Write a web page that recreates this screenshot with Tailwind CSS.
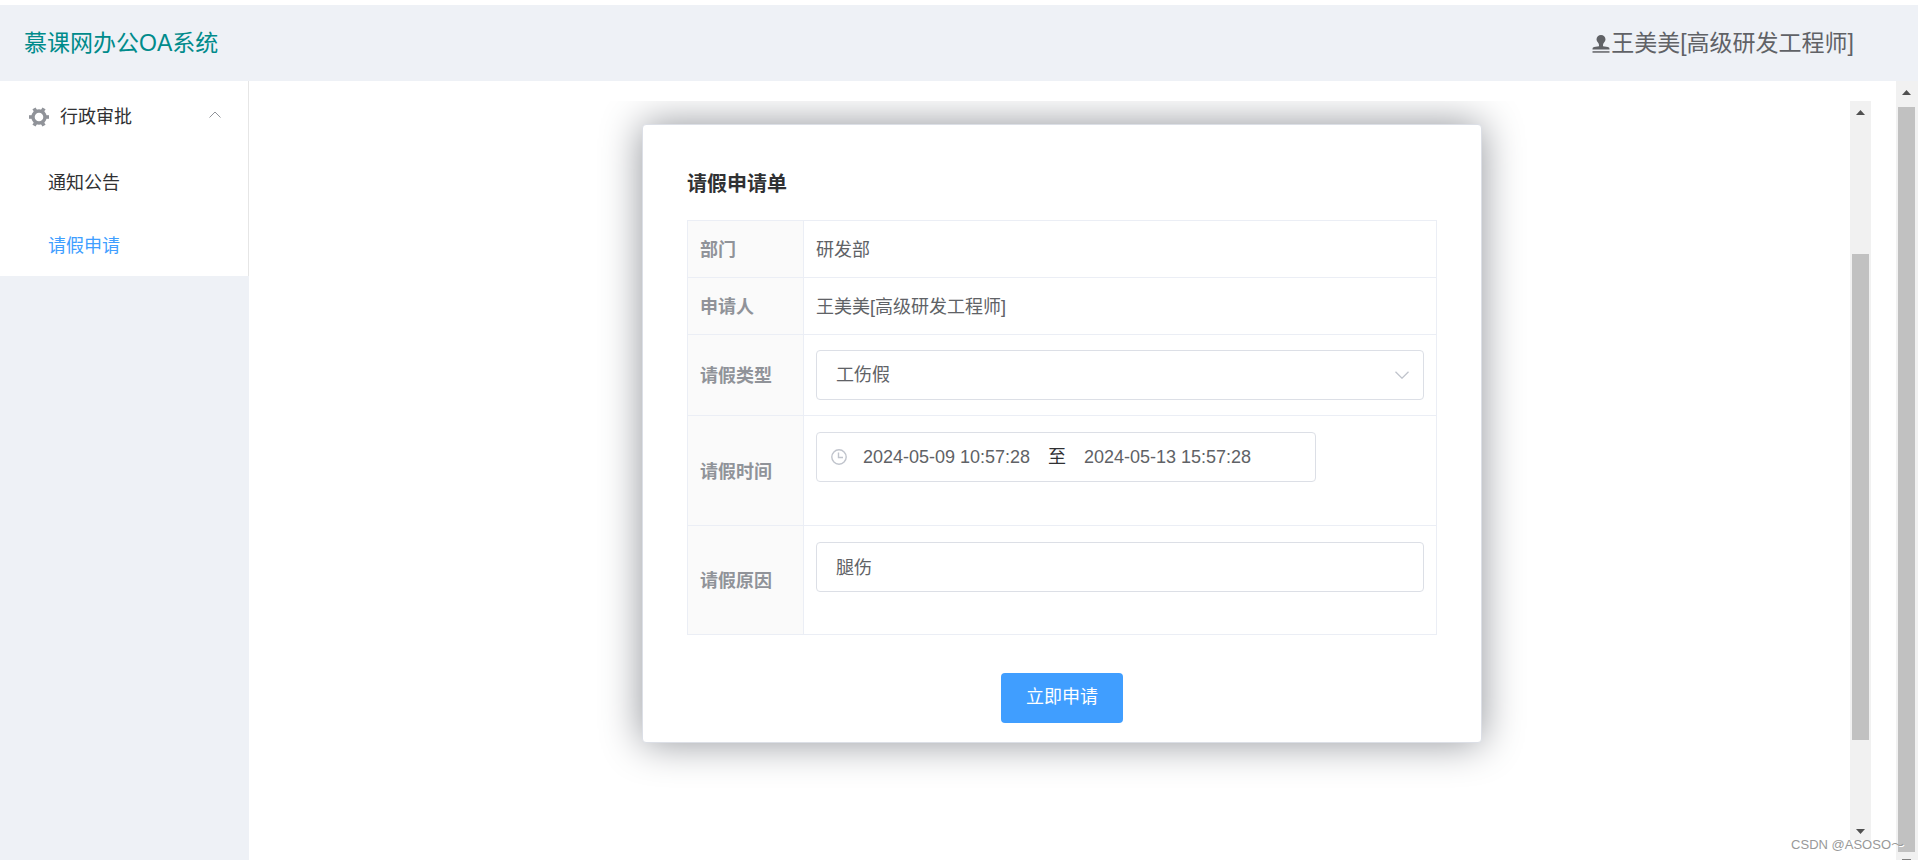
<!DOCTYPE html>
<html lang="zh-CN">
<head>
<meta charset="utf-8">
<meta name="viewport" content="width=device-width, initial-scale=1">
<title>慕课网办公OA系统</title>
<script src="https://cdn.jsdelivr.net/npm/@tailwindcss/browser@4"></script>
</head>
<body class="relative flex h-screen flex-col overflow-hidden bg-white pt-[5px] font-['Liberation_Sans','Noto_Sans_CJK_SC',sans-serif] text-lg font-normal text-[#303133]">
  <header class="flex h-[76px] shrink-0 items-center justify-between bg-[#eef1f6] pt-0.5 pr-16 pl-6 text-[23px]">
    <h1 class="text-[#008b8b]">慕课网办公OA系统</h1>
    <div class="flex items-center gap-px text-[#606266]">
      <svg class="size-[18px]" viewBox="0 0 18 18" fill="currentColor" aria-hidden="true">
        <path d="M9 0a4.500 4.500 0 0 1 4.500 4.500c0 2.300-2.500 3.400-2.500 5.500v1.300l5 .7a1.800 1.800 0 0 1 1.500 2v.500H.5V14A1.800 1.800 0 0 1 2 12l5-.7V10c0-2.100-2.500-3.200-2.500-5.500A4.500 4.500 0 0 1 9 0z"/>
        <path d="M.5 16.200h17v1.500H.5z"/>
      </svg>
      <span>王美美[高级研发工程师]</span>
    </div>
  </header>

  <div class="flex min-h-0 flex-1">
    <aside class="w-[249px] shrink-0 bg-[#eef1f6]">
      <nav class="border-r border-[#e6e6e6] bg-white">
        <button type="button" class="flex h-[70px] w-full items-center pt-0.5 pr-[27px] pl-[29px]" aria-expanded="true">
          <svg class="mr-[11px] size-5" viewBox="0 0 20 20" aria-hidden="true">
            <circle cx="10" cy="10" r="6" fill="none" stroke="#909399" stroke-width="3.400"/>
            <g fill="#909399">
              <path d="M0 8.200h3v3.600H0z"/>
              <path d="M0 8.200h3v3.600H0z" transform="rotate(60 10 10)"/>
              <path d="M0 8.200h3v3.600H0z" transform="rotate(120 10 10)"/>
              <path d="M0 8.200h3v3.600H0z" transform="rotate(180 10 10)"/>
              <path d="M0 8.200h3v3.600H0z" transform="rotate(240 10 10)"/>
              <path d="M0 8.200h3v3.600H0z" transform="rotate(300 10 10)"/>
            </g>
          </svg>
          <span class="flex-1 text-left">行政审批</span>
          <svg class="mb-1 h-2 w-3" viewBox="0 0 12 8" fill="none" stroke="#909399" aria-hidden="true"><path d="M.5 6.500 6 1l5.500 5.500"/></svg>
        </button>
        <a href="#notice" class="flex h-[62px] items-center pt-0.5 pl-12">通知公告</a>
        <a href="#leave" class="flex h-[63px] items-center pt-0.5 pl-12 text-[#409eff]" aria-current="page">请假申请</a>
      </nav>
    </aside>

    <main class="flex min-w-0 flex-1 overflow-hidden pt-5 pr-[25px] pl-[25px]">
      <div class="min-w-0 flex-1 overflow-hidden pt-[23px]">
        <form class="mx-auto max-w-[840px] rounded border border-[#dcdfe6] bg-white px-11 pt-11 pb-[19px] shadow-[0_0_40px_#909399]">
          <h2 class="mb-[21px] text-xl/[30px] font-bold">请假申请单</h2>
          <table class="w-full border-collapse text-[#606266]">
            <tbody>
              <tr>
                <th scope="row" class="h-[57px] w-[116px] border border-[#ebeef5] bg-[#fafafa] pt-0.5 pl-3 text-left font-bold text-[#909399]">部门</th>
                <td class="border border-[#ebeef5] px-3 pt-0.5">研发部</td>
              </tr>
              <tr>
                <th scope="row" class="h-[57px] border border-[#ebeef5] bg-[#fafafa] pt-0.5 pl-3 text-left font-bold text-[#909399]">申请人</th>
                <td class="border border-[#ebeef5] px-3 pt-0.5">王美美[高级研发工程师]</td>
              </tr>
              <tr>
                <th scope="row" class="h-[81px] border border-[#ebeef5] bg-[#fafafa] pt-0.5 pl-3 text-left font-bold text-[#909399]"><label for="type">请假类型</label></th>
                <td class="border border-[#ebeef5] px-3">
                  <div class="relative">
                    <select id="type" class="block h-[50px] w-full appearance-none rounded border border-[#dcdfe6] bg-white px-[19px]"><option>工伤假</option></select>
                    <svg class="pointer-events-none absolute top-[21px] right-[15px] h-2 w-[14px]" viewBox="0 0 14 8" fill="none" stroke="#c0c4cc" stroke-width="1.300" aria-hidden="true"><path d="M.5.800 7 7.200 13.500.800"/></svg>
                  </div>
                </td>
              </tr>
              <tr>
                <th scope="row" class="h-[110px] border border-[#ebeef5] bg-[#fafafa] pt-0.5 pl-3 text-left font-bold text-[#909399]"><label for="start">请假时间</label></th>
                <td class="border border-[#ebeef5] px-3 pt-4 align-top">
                  <div class="flex h-[50px] max-w-[500px] items-center rounded border border-[#dcdfe6] pl-[14px]">
                    <svg class="size-4 shrink-0" viewBox="0 0 16 16" fill="none" stroke="#c0c4cc" stroke-width="1.400" aria-hidden="true"><circle cx="8" cy="8" r="7.200"/><path d="M7.500 3.500v5h4.500"/></svg>
                    <input id="start" type="text" value="2024-05-09 10:57:28" class="ml-[3px] w-[193px] min-w-0 text-center">
                    <span class="w-7 text-center text-[#303133]">至</span>
                    <input type="text" aria-label="结束时间" value="2024-05-13 15:57:28" class="w-[193px] min-w-0 text-center">
                  </div>
                </td>
              </tr>
              <tr>
                <th scope="row" class="h-[109px] border border-[#ebeef5] bg-[#fafafa] pt-0.5 pl-3 text-left font-bold text-[#909399]"><label for="reason">请假原因</label></th>
                <td class="border border-[#ebeef5] px-3 pt-4 align-top">
                  <input id="reason" type="text" value="腿伤" class="block h-[50px] w-full rounded border border-[#dcdfe6] px-[19px] pb-0.5">
                </td>
              </tr>
            </tbody>
          </table>
          <div class="mt-[38px] flex justify-center">
            <button type="submit" class="h-[50px] w-[122px] rounded bg-[#409eff] pb-0.5 text-white">立即申请</button>
          </div>
        </form>
      </div>

      <div class="mb-[20px] flex w-[21px] shrink-0 flex-col items-center bg-[#f1f1f1]" aria-hidden="true">
        <svg class="mt-[9px] h-[5px] w-[9px] shrink-0" viewBox="0 0 9 5" fill="#505050"><path d="M0 5 4.500 0 9 5z"/></svg>
        <div class="mt-[139px] mb-[89px] w-[17px] flex-1 bg-[#c1c1c1]"></div>
        <svg class="mb-[6px] h-[5px] w-[9px] shrink-0" viewBox="0 0 9 5" fill="#505050"><path d="M0 0 4.500 5 9 0z"/></svg>
      </div>
    </main>

    <div class="flex w-[22px] shrink-0 flex-col items-center bg-[#f1f1f1] pr-px" aria-hidden="true">
      <svg class="mt-[9px] h-[5px] w-[9px] shrink-0" viewBox="0 0 9 5" fill="#505050"><path d="M0 5 4.500 0 9 5z"/></svg>
      <div class="mt-3 mb-[7px] w-[17px] flex-1 bg-[#c1c1c1]"></div>
      <div class="h-px w-[9px] shrink-0 bg-[#808080]"></div>
    </div>
  </div>

  <p class="absolute right-[14px] bottom-[5px] text-[13px] text-[#999] [text-shadow:1px_1px_0_#fff]">CSDN @ASOSO～</p>
</body>
</html>
